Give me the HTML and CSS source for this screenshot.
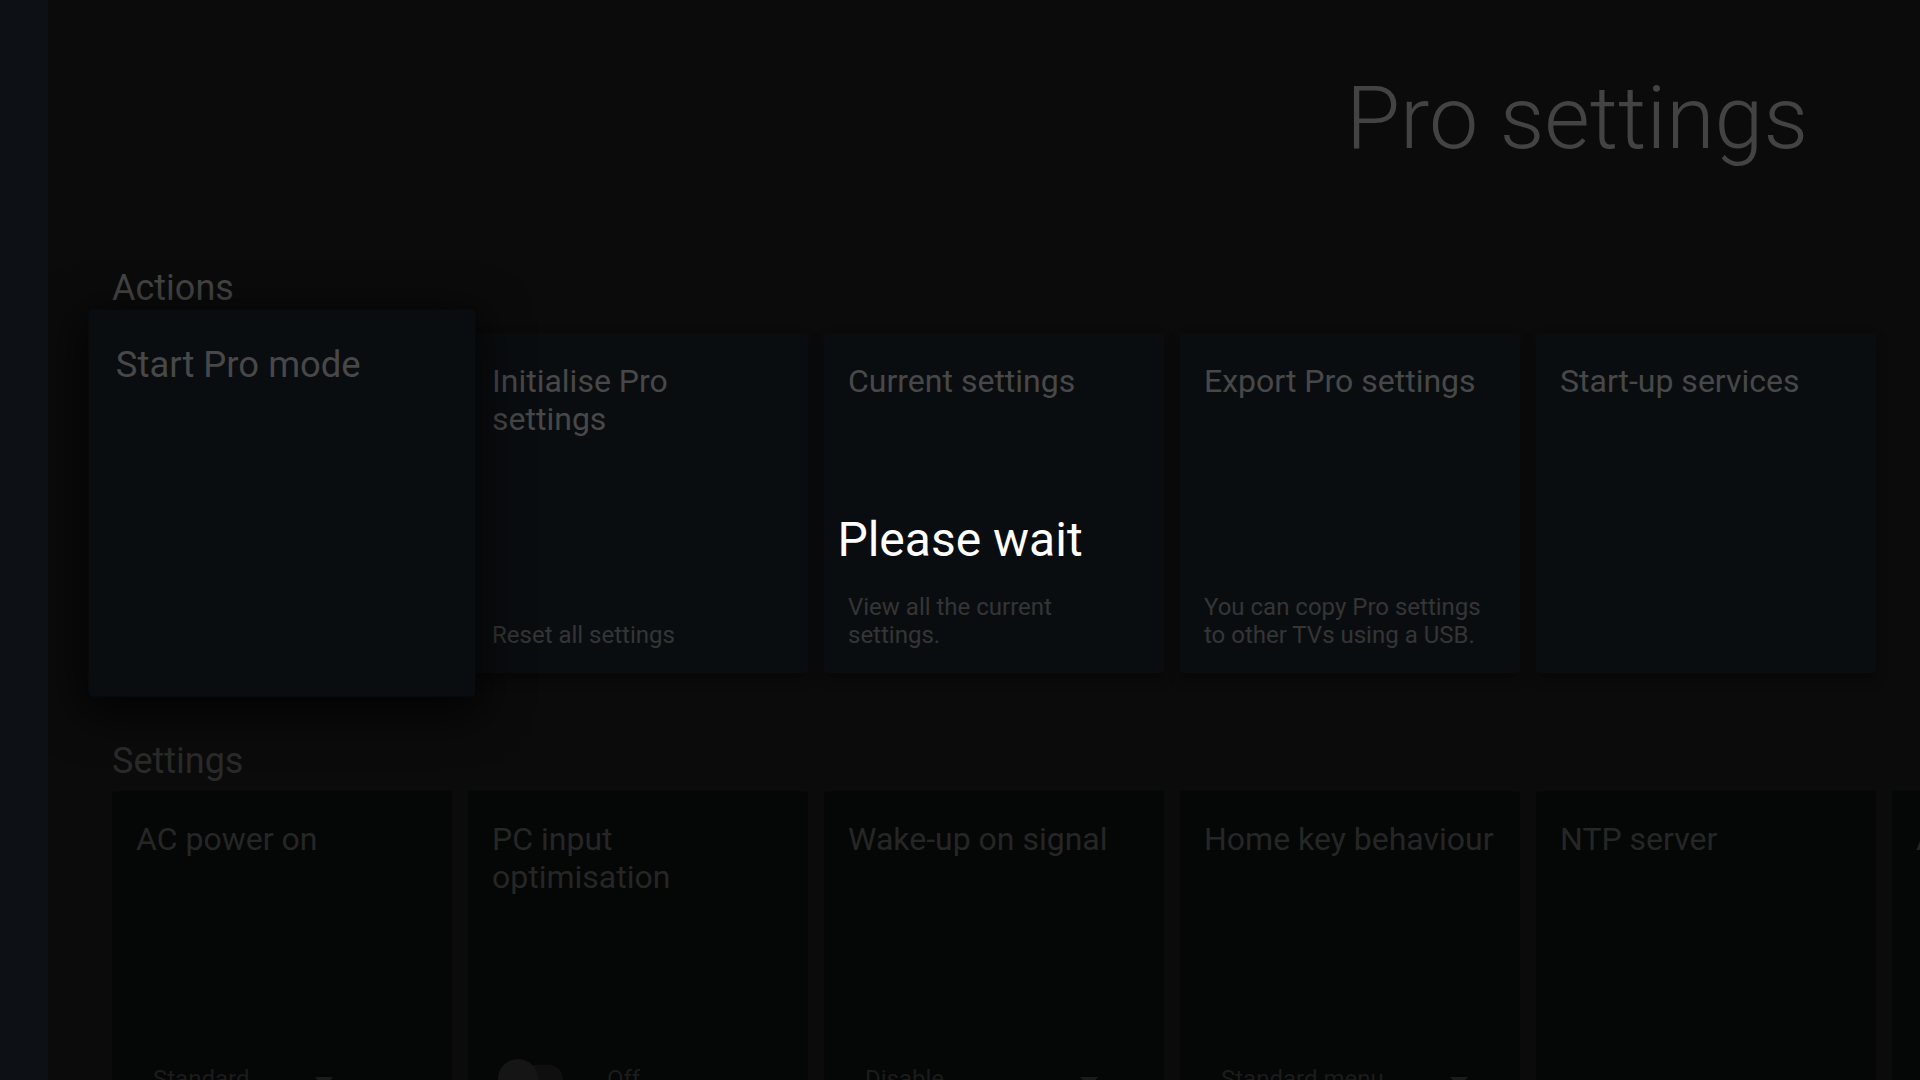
FILE: index.html
```html
<!DOCTYPE html>
<html lang="en">

<head>
    <meta charset="UTF-8">
    <meta name="viewport" content="width=device-width, initial-scale=1.0">
    <title>Pro settings</title>
    <link rel="stylesheet" href="styles.css">
</head>

<body>
    <div class="screen">
        <aside class="rail"></aside>
        <main class="content">
            <header class="page_head">
                <h1>Pro settings</h1>
            </header>

            <section class="group">
                <h2 class="group_title">Actions</h2>
                <div class="row">
                    <div class="card focus">
                        <div class="card_title">Start Pro mode</div>
                    </div>
                    <div class="card">
                        <div class="card_title">Initialise Pro settings</div>
                        <div class="card_desc">Reset all settings</div>
                    </div>
                    <div class="card">
                        <div class="card_title">Current settings</div>
                        <div class="card_desc">View all the current settings.</div>
                    </div>
                    <div class="card">
                        <div class="card_title">Export Pro settings</div>
                        <div class="card_desc">You can copy Pro settings to other TVs using a USB.</div>
                    </div>
                    <div class="card">
                        <div class="card_title">Start-up services</div>
                    </div>
                </div>
            </section>

            <section class="group settings">
                <h2 class="group_title">Settings</h2>
                <div class="row">
                    <div class="card off">
                        <div class="card_title">AC power on</div>
                        <div class="foot">
                            <span class="value">Standard</span>
                            <svg class="caret" width="18" height="10" viewBox="0 0 18 10"><path d="M0 0h18L9 10z" fill="#1b1b1b"/></svg>
                        </div>
                    </div>
                    <div class="card off">
                        <div class="card_title">PC input optimisation</div>
                        <div class="foot">
                            <span class="toggle"><span class="knob"></span></span>
                            <span class="value">Off</span>
                        </div>
                    </div>
                    <div class="card off">
                        <div class="card_title">Wake-up on signal</div>
                        <div class="foot">
                            <span class="value wide">Disable</span>
                            <svg class="caret" width="18" height="10" viewBox="0 0 18 10"><path d="M0 0h18L9 10z" fill="#1b1b1b"/></svg>
                        </div>
                    </div>
                    <div class="card off">
                        <div class="card_title">Home key behaviour</div>
                        <div class="foot">
                            <span class="value">Standard menu</span>
                            <svg class="caret" width="18" height="10" viewBox="0 0 18 10"><path d="M0 0h18L9 10z" fill="#1b1b1b"/></svg>
                        </div>
                    </div>
                    <div class="card off">
                        <div class="card_title">NTP server</div>
                    </div>
                    <div class="card off">
                        <div class="card_title">Auto power off</div>
                    </div>
                </div>
            </section>
        </main>

        <!-- loading overlay -->
        <div class="busy">
            <span>Please wait</span>
        </div>
    </div>
</body>

</html>
```

FILE: styles.css
```css
body {
    margin: 0;
    background-color: #0b0b0b;
    font-family: Roboto, "Liberation Sans", sans-serif;
    overflow: hidden;
}

.screen {
    display: flex;
    width: 1920px;
    height: 1080px;
    overflow: hidden;
}

.rail {
    flex: 0 0 48px;
    background-color: #0d1115;
}

.content {
    flex: 1;
    min-width: 0;
    padding-left: 64px;
    overflow: hidden;
}

.page_head {
    padding: 66px 112px 0 0;
    text-align: right;
}

.page_head h1 {
    margin: 0;
    font-size: 88px;
    line-height: 104px;
    font-weight: 300;
    color: #434343;
}

.group_title {
    margin: 98px 0 25px;
    font-size: 36px;
    line-height: 40px;
    font-weight: 400;
    color: #454545;
}

.settings .group_title {
    margin: 68px 0 10px;
    color: #2a2a2a;
}

.row {
    display: flex;
    gap: 16px;
}

.card {
    flex: 0 0 340px;
    height: 340px;
    box-sizing: border-box;
    padding: 29px 20px 24px 24px;
    display: flex;
    flex-direction: column;
    border-radius: 4px;
    background-color: #0a0d10;
    box-shadow: 0 6px 12px rgba(0, 0, 0, 0.35);
}

.card_title {
    font-size: 32px;
    line-height: 38px;
    color: #484848;
}

.card_desc {
    margin-top: auto;
    font-size: 24px;
    line-height: 28px;
    color: #353535;
}

.focus {
    z-index: 1;
    transform: scale(1.138);
    box-shadow: 0 10px 40px 6px rgba(0, 0, 0, 0.75);
}

.off {
    background-color: #050606;
    box-shadow: none;
}

.off .card_title {
    color: #262626;
}

.foot {
    display: flex;
    align-items: center;
    height: 40px;
    margin-top: auto;
    margin-bottom: 8px;
    padding-left: 17px;
    font-size: 24px;
    line-height: 28px;
    color: #1c1c1c;
}

.caret {
    margin-left: 66px;
    margin-top: 6px;
}

.value.wide {
    margin-right: 70px;
}

.toggle {
    display: flex;
    align-items: center;
    width: 65px;
    height: 28px;
    margin-left: -11px;
    margin-right: 44px;
    border-radius: 14px;
    background-color: #0f0f0f;
}

.knob {
    width: 40px;
    height: 40px;
    border-radius: 50%;
    background-color: #151515;
}

.busy {
    position: absolute;
    top: 0;
    left: 0;
    width: 1920px;
    height: 1080px;
    display: flex;
    justify-content: center;
    align-items: center;
    z-index: 5;
}

.busy span {
    font-size: 48px;
    line-height: 56px;
    color: #fff;
}
```
